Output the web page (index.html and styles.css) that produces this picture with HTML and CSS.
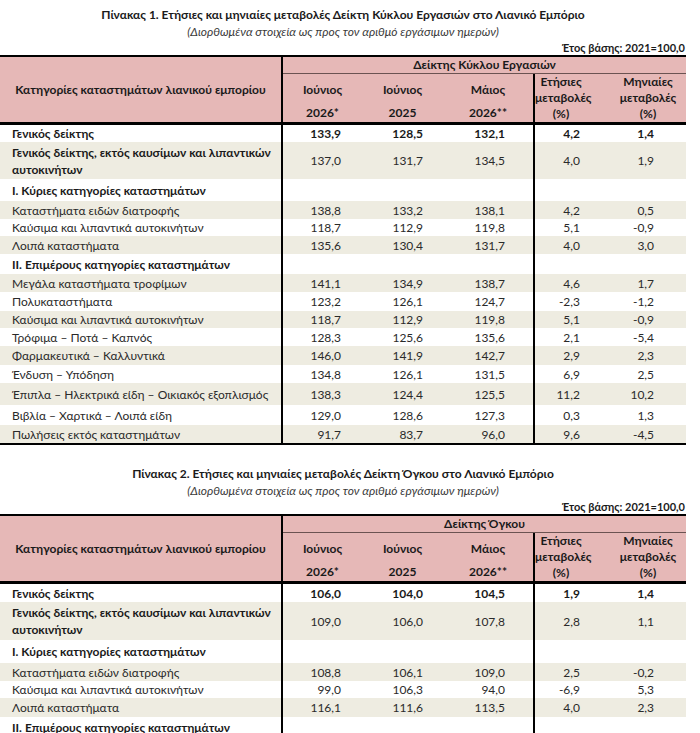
FILE: index.html
```html
<!DOCTYPE html>
<html lang="el">
<head>
<meta charset="utf-8">
<title>Λιανικό Εμπόριο</title>
<link rel="stylesheet" href="styles.css">
</head>
<body>
<section class="block">
  <h2 class="title">Πίνακας 1. Ετήσιες και μηνιαίες μεταβολές Δείκτη Κύκλου Εργασιών στο Λιανικό Εμπόριο</h2>
  <p class="subtitle">(Διορθωμένα στοιχεία ως προς τον αριθμό εργάσιμων ημερών)</p>
  <p class="base">Έτος βάσης: 2021=100,0</p>
  <table class="tbl">
    <colgroup>
      <col class="w-lab"><col class="w-c1"><col class="w-c2"><col class="w-c3"><col class="w-c4"><col class="w-c5">
    </colgroup>
    <thead>
      <tr class="h1">
        <th rowspan="3" class="lab-h">Κατηγορίες καταστημάτων λιανικού εμπορίου</th>
        <th colspan="5" class="idx">Δείκτης Κύκλου Εργασιών</th>
      </tr>
      <tr class="h2">
        <th class="mon">Ιούνιος</th><th class="mon">Ιούνιος</th><th class="mon">Μάιος</th>
        <th rowspan="2" class="chg sep">Ετήσιες<br>μεταβολές<br>(%)</th>
        <th rowspan="2" class="chg last">Μηνιαίες<br>μεταβολές<br>(%)</th>
      </tr>
      <tr class="h3">
        <th class="yr">2026*</th><th class="yr">2025</th><th class="yr">2026**</th>
      </tr>
    </thead>
    <tbody>
      <tr class="r17 bold"><td class="lab">Γενικός δείκτης</td><td class="n1">133,9</td><td class="n2">128,5</td><td class="n3">132,1</td><td class="n4">4,2</td><td class="n5">1,4</td></tr>
      <tr class="r37 alt"><td class="lab b">Γενικός δείκτης, εκτός καυσίμων και λιπαντικών<br>αυτοκινήτων</td><td class="n1">137,0</td><td class="n2">131,7</td><td class="n3">134,5</td><td class="n4">4,0</td><td class="n5">1,9</td></tr>
      <tr class="r22"><td class="lab b">Ι. Κύριες κατηγορίες καταστημάτων</td><td class="n1"></td><td class="n2"></td><td class="n3"></td><td class="n4"></td><td class="n5"></td></tr>
      <tr class="r18 alt"><td class="lab">Καταστήματα ειδών διατροφής</td><td class="n1">138,8</td><td class="n2">133,2</td><td class="n3">138,1</td><td class="n4">4,2</td><td class="n5">0,5</td></tr>
      <tr class="r17"><td class="lab">Καύσιμα και λιπαντικά αυτοκινήτων</td><td class="n1">118,7</td><td class="n2">112,9</td><td class="n3">119,8</td><td class="n4">5,1</td><td class="n5">-0,9</td></tr>
      <tr class="r18 alt"><td class="lab">Λοιπά καταστήματα</td><td class="n1">135,6</td><td class="n2">130,4</td><td class="n3">131,7</td><td class="n4">4,0</td><td class="n5">3,0</td></tr>
      <tr class="r20"><td class="lab b">ΙΙ. Επιμέρους κατηγορίες καταστημάτων</td><td class="n1"></td><td class="n2"></td><td class="n3"></td><td class="n4"></td><td class="n5"></td></tr>
      <tr class="r18 alt"><td class="lab">Μεγάλα καταστήματα τροφίμων</td><td class="n1">141,1</td><td class="n2">134,9</td><td class="n3">138,7</td><td class="n4">4,6</td><td class="n5">1,7</td></tr>
      <tr class="r19"><td class="lab">Πολυκαταστήματα</td><td class="n1">123,2</td><td class="n2">126,1</td><td class="n3">124,7</td><td class="n4">-2,3</td><td class="n5">-1,2</td></tr>
      <tr class="r17 alt"><td class="lab">Καύσιμα και λιπαντικά αυτοκινήτων</td><td class="n1">118,7</td><td class="n2">112,9</td><td class="n3">119,8</td><td class="n4">5,1</td><td class="n5">-0,9</td></tr>
      <tr class="r18"><td class="lab">Τρόφιμα – Ποτά – Καπνός</td><td class="n1">128,3</td><td class="n2">125,6</td><td class="n3">135,6</td><td class="n4">2,1</td><td class="n5">-5,4</td></tr>
      <tr class="r19 alt"><td class="lab">Φαρμακευτικά – Καλλυντικά</td><td class="n1">146,0</td><td class="n2">141,9</td><td class="n3">142,7</td><td class="n4">2,9</td><td class="n5">2,3</td></tr>
      <tr class="r18"><td class="lab">Ένδυση – Υπόδηση</td><td class="n1">134,8</td><td class="n2">126,1</td><td class="n3">131,5</td><td class="n4">6,9</td><td class="n5">2,5</td></tr>
      <tr class="r22 alt"><td class="lab">Έπιπλα – Ηλεκτρικά είδη – Οικιακός εξοπλισμός</td><td class="n1">138,3</td><td class="n2">124,4</td><td class="n3">125,5</td><td class="n4">11,2</td><td class="n5">10,2</td></tr>
      <tr class="r20"><td class="lab">Βιβλία – Χαρτικά – Λοιπά είδη</td><td class="n1">129,0</td><td class="n2">128,6</td><td class="n3">127,3</td><td class="n4">0,3</td><td class="n5">1,3</td></tr>
      <tr class="r18 alt"><td class="lab">Πωλήσεις εκτός καταστημάτων</td><td class="n1">91,7</td><td class="n2">83,7</td><td class="n3">96,0</td><td class="n4">9,6</td><td class="n5">-4,5</td></tr>
    </tbody>
  </table>
</section>

<section class="block">
  <h2 class="title">Πίνακας 2. Ετήσιες και μηνιαίες μεταβολές Δείκτη Όγκου στο Λιανικό Εμπόριο</h2>
  <p class="subtitle">(Διορθωμένα στοιχεία ως προς τον αριθμό εργάσιμων ημερών)</p>
  <p class="base">Έτος βάσης: 2021=100,0</p>
  <table class="tbl">
    <colgroup>
      <col class="w-lab"><col class="w-c1"><col class="w-c2"><col class="w-c3"><col class="w-c4"><col class="w-c5">
    </colgroup>
    <thead>
      <tr class="h1">
        <th rowspan="3" class="lab-h">Κατηγορίες καταστημάτων λιανικού εμπορίου</th>
        <th colspan="5" class="idx">Δείκτης Όγκου</th>
      </tr>
      <tr class="h2">
        <th class="mon">Ιούνιος</th><th class="mon">Ιούνιος</th><th class="mon">Μάιος</th>
        <th rowspan="2" class="chg sep">Ετήσιες<br>μεταβολές<br>(%)</th>
        <th rowspan="2" class="chg last">Μηνιαίες<br>μεταβολές<br>(%)</th>
      </tr>
      <tr class="h3">
        <th class="yr">2026*</th><th class="yr">2025</th><th class="yr">2026**</th>
      </tr>
    </thead>
    <tbody>
      <tr class="r18 bold"><td class="lab">Γενικός δείκτης</td><td class="n1">106,0</td><td class="n2">104,0</td><td class="n3">104,5</td><td class="n4">1,9</td><td class="n5">1,4</td></tr>
      <tr class="r38 alt"><td class="lab b">Γενικός δείκτης, εκτός καυσίμων και λιπαντικών<br>αυτοκινήτων</td><td class="n1">109,0</td><td class="n2">106,0</td><td class="n3">107,8</td><td class="n4">2,8</td><td class="n5">1,1</td></tr>
      <tr class="r23"><td class="lab b">Ι. Κύριες κατηγορίες καταστημάτων</td><td class="n1"></td><td class="n2"></td><td class="n3"></td><td class="n4"></td><td class="n5"></td></tr>
      <tr class="r18 alt"><td class="lab">Καταστήματα ειδών διατροφής</td><td class="n1">108,8</td><td class="n2">106,1</td><td class="n3">109,0</td><td class="n4">2,5</td><td class="n5">-0,2</td></tr>
      <tr class="r17"><td class="lab">Καύσιμα και λιπαντικά αυτοκινήτων</td><td class="n1">99,0</td><td class="n2">106,3</td><td class="n3">94,0</td><td class="n4">-6,9</td><td class="n5">5,3</td></tr>
      <tr class="r19 alt"><td class="lab">Λοιπά καταστήματα</td><td class="n1">116,1</td><td class="n2">111,6</td><td class="n3">113,5</td><td class="n4">4,0</td><td class="n5">2,3</td></tr>
      <tr class="r20"><td class="lab b">ΙΙ. Επιμέρους κατηγορίες καταστημάτων</td><td class="n1"></td><td class="n2"></td><td class="n3"></td><td class="n4"></td><td class="n5"></td></tr>
    </tbody>
  </table>
</section>
</body>
</html>
```
FILE: styles.css
```css
* { box-sizing: border-box; }
html, body { margin: 0; padding: 0; background: #ffffff; }
body {
  width: 700px;
  font-family: Lato, "Open Sans", "Noto Sans", sans-serif;
  font-size: 12px;
  color: #2a2a2a;
}
.block { width: 686px; padding-top: 6px; }
.block + .block { margin-top: 14px; }
.title {
  margin: 0;
  font-size: 12px;
  line-height: 17px;
  font-weight: 700;
  text-align: center;
  color: #1a1a1a;
}
.subtitle {
  margin: 0;
  font-size: 12px;
  line-height: 17px;
  font-style: italic;
  text-align: center;
  color: #3a3a3a;
}
.base {
  margin: 0;
  font-size: 11px;
  line-height: 15px;
  font-weight: 700;
  text-align: right;
  padding-right: 1px;
  color: #1a1a1a;
}
.tbl {
  width: 686px;
  table-layout: fixed;
  border-collapse: separate;
  border-spacing: 0;
  border-top: 2px solid #000;
  border-bottom: 2px solid #000;
}
.w-lab { width: 283px; }
.w-c1 { width: 79px; }
.w-c2 { width: 81px; }
.w-c3 { width: 90px; }
.w-c4 { width: 54px; }
.w-c5 { width: 99px; }

.tbl th {
  background: #e6b8b7;
  font-weight: 700;
  color: #1a1a1a;
  padding: 0;
  text-align: center;
  line-height: 16px;
}
.lab-h {
  border-right: 2px solid #000;
  border-bottom: 3px solid #000;
  vertical-align: middle;
}
.h1 { height: 16px; }
.h2 { height: 31px; }
.h3 { height: 20px; }
.idx { border-bottom: 1px solid #6b5352; vertical-align: middle; line-height: 15px; }
.mon { vertical-align: middle; }
.yr { vertical-align: bottom; border-bottom: 3px solid #000; padding-bottom: 1px !important; }
.chg { vertical-align: middle; border-bottom: 3px solid #000; line-height: 16.5px; }
.sep { border-left: 2px solid #000; }
.chg.last { padding-left: 23px !important; }

.tbl td {
  padding: 0;
  line-height: 17px;
  vertical-align: middle;
  white-space: nowrap;
}
.tbl td.lab {
  border-right: 2px solid #000;
  padding-left: 12px;
}
.tbl td.b { font-weight: 700; color: #1a1a1a; }
.bold td { font-weight: 700; color: #1a1a1a; }
.alt td { background: #eeece1; }
.n1, .n2, .n3, .n4, .n5 { text-align: right; }
.n1 { padding-right: 21px !important; }
.n2 { padding-right: 20px !important; }
.n3 { padding-right: 28px !important; }
.n4 { padding-right: 7px !important; border-left: 2px solid #000; }
.n5 { padding-right: 32px !important; }

.r17 { height: 17px; }
.r18 { height: 18px; }
.r19 { height: 19px; }
.r20 { height: 20px; }
.r22 { height: 22px; }
.r23 { height: 23px; }
.r37 { height: 37px; }
.r38 { height: 38px; }
```
